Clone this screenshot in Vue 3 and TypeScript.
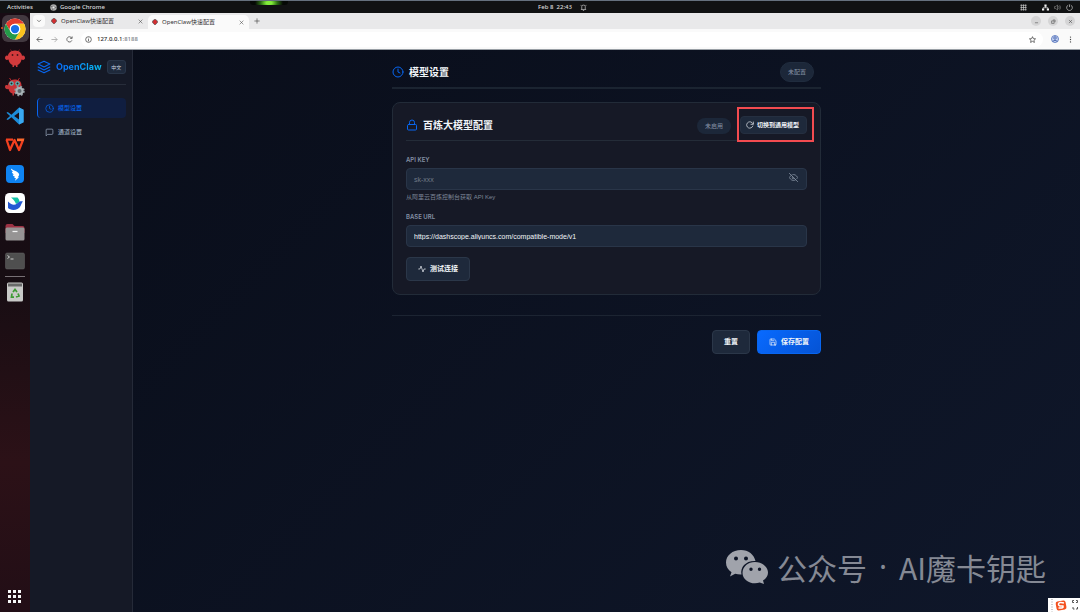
<script setup lang="ts">
import { ref } from 'vue'

interface Tab { id: number; title: string; active: boolean }
interface NavItem { id: string; label: string; icon: 'clock' | 'chat' }

const tabs: Tab[] = [
  { id: 1, title: 'OpenClaw快速配置', active: false },
  { id: 2, title: 'OpenClaw快速配置', active: true },
]
const navItems: NavItem[] = [
  { id: 'model', label: '模型设置', icon: 'clock' },
  { id: 'channel', label: '通道设置', icon: 'chat' },
]
const current = ref('model')
const apiKey = ref('')
const baseUrl = ref('https://dashscope.aliyuncs.com/compatible-mode/v1')
const keyVisible = ref(false)

function reset(): void {
  apiKey.value = ''
  baseUrl.value = 'https://dashscope.aliyuncs.com/compatible-mode/v1'
}
</script>

<template>
  <div class="desktop">
    <header class="topbar">
      <span class="activities">Activities</span>
      <span class="app-name">
        <svg viewBox="0 0 16 16" class="i7"><circle cx="8" cy="8" r="7.5" fill="#a9a9a9" /><path d="M8 8 1.5 4.5M8 8h7.5M8 8l-3 7" stroke="#555" stroke-width="1.5" /><circle cx="8" cy="8" r="3" fill="#eee" stroke="#666" /></svg>
        Google Chrome
      </span>
      <span class="clock">Feb 8&nbsp; 22:43
        <svg viewBox="0 0 16 16" class="i7 line"><path d="M2 12.500h12M4 12V5.500q0-3 4-3t4 3V12M6.500 15h3M1 2l2 2M15 2l-2 2" /></svg>
      </span>
      <span class="tray">
        <svg viewBox="0 0 16 16" class="i7 line grid-glyph"><path d="M3 1v14M8 1v14M13 1v14M1 3h14M1 8h14M1 13h14" /></svg>
        <svg viewBox="0 0 16 16" class="i7"><path d="M5.500 1h5v5h-5zM0 10h5v5H0zM11 10h5v5h-5z" fill="#f2f2f2" /><path d="M8 5v3.500M2.500 11V8.500h11V11" fill="none" stroke="#f2f2f2" stroke-width="1.500" /></svg>
        <svg viewBox="0 0 16 16" class="i7 line dim"><path d="M1 6v4h3l4 4V2L4 6zM10.500 5q2.500 3 0 6M13 3q4 5 0 10" /></svg>
        <svg viewBox="0 0 16 16" class="i7 line"><path d="M5 2.500a6.500 6.500 0 1 0 6 0M8 1v6" /></svg>
      </span>
      <span class="glow"></span>
    </header>

    <div class="workspace">
      <nav class="dock" aria-label="Dock">
        <button class="dock-item" aria-label="Google Chrome">
          <span class="tile">
            <svg viewBox="0 0 48 48" class="d22"><circle cx="24" cy="24" r="23" fill="#fff" /><path d="M4.100 12.500A23 23 0 0 1 43.900 12.500H24A11.500 11.500 0 0 0 14 29.700z" fill="#e33b2e" /><path d="M43.900 12.500A23 23 0 0 1 24 47l10-17.300A11.500 11.500 0 0 0 24 12.500z" fill="#fcc31e" /><path d="M24 47A23 23 0 0 1 4.100 12.500L14 29.700a11.500 11.500 0 0 0 20 0z" fill="#249a49" /><circle cx="24" cy="24" r="11.500" fill="#fff" /><circle cx="24" cy="24" r="9" fill="#1a6fe8" /></svg>
          </span>
          <span class="running"></span>
        </button>
        <button class="dock-item" aria-label="OpenClaw">
          <svg viewBox="0 0 40 40" class="d20"><path d="M15 9 11 3M25 9l4-6" stroke="#8f2429" stroke-width="1.500" /><path d="M20 5C11 5 6 11 6 16c-3-2-6 0-6 4 0 3 3 5 7 3 1 6 4 9 8 11v4h3v-3h4v3h3v-4c4-2 7-5 8-11 4 2 7 0 7-3 0-4-3-6-6-4-0-5-5-11-14-11z" fill="#d23a3c" /><circle cx="15" cy="14" r="1.800" fill="#451318" /><circle cx="25" cy="14" r="1.800" fill="#451318" /></svg>
        </button>
        <button class="dock-item" aria-label="OpenClaw Settings">
          <svg viewBox="0 0 40 40" class="d20"><path d="M14 9 9 2M24 9l5-7" stroke="#b9282c" stroke-width="2" /><path d="M19 5C10 5 6 12 6 17c-3-2-6-1-6 3 0 3 3 5 7 4 1 5 4 8 8 9v4h3v-4c10 0 15-8 15-16C33 9 28 5 19 5z" fill="#c93538" /><circle cx="13" cy="13" r="4.500" fill="#5bb8b8" /><circle cx="25" cy="13" r="4.500" fill="#5bb8b8" /><circle cx="13" cy="13" r="2" fill="#222" /><circle cx="25" cy="13" r="2" fill="#222" /><circle cx="29" cy="28" r="8.500" fill="none" stroke="#8e9a9e" stroke-width="4" stroke-dasharray="3.700 3" /><circle cx="29" cy="28" r="6" fill="#5d676b" stroke="#a9b3b6" stroke-width="4" /></svg>
        </button>
        <button class="dock-item" aria-label="Visual Studio Code">
          <svg viewBox="0 0 40 40" class="d18"><path d="M29 1 39 6v28l-10 5-17-16-8 6-3-2 8-7-8-7 3-2 8 6zM29 12 18 20l11 8z" fill="#1c8bd8" fill-rule="evenodd" /><path d="M29 1 39 6v28l-10 5z" fill="#3aa6ee" /></svg>
        </button>
        <button class="dock-item" aria-label="WPS Office">
          <svg viewBox="0 0 40 28" class="d20"><path d="M2 3h14M3 3l7 21 9-20 9 20 8-20H24" fill="none" stroke="#f5401f" stroke-width="4.500" stroke-linejoin="round" /><path d="M24 1h15l-2 5H24z" fill="#ff6a2c" /></svg>
        </button>
        <button class="dock-item" aria-label="DingTalk">
          <svg viewBox="0 0 40 40" class="d18"><rect width="40" height="40" rx="9" fill="#0f83f2" /><path d="M11 8c6 5 15 6 18 12 1 3-2 6-3 7h3l-9 8 2-6h-4l2-3c-4-1-5-4-5-5h3c-4-2-5-5-5-6h3c-4-3-5-5-5-7z" fill="#fff" /></svg>
        </button>
        <button class="dock-item" aria-label="Feishu">
          <svg viewBox="0 0 40 40" class="d20"><rect width="40" height="40" rx="9" fill="#fff" /><path d="M12 9h13c3 3 4 6 4 9l-7 4c-2-6-6-10-10-13z" fill="#14c1a7" /><path d="M6 17c8 8 13 8 18 4 5-5 8-5 12-4-4 4-4 12-11 15-8 4-16 1-19-2z" fill="#2458d3" /></svg>
        </button>
        <button class="dock-item" aria-label="Files">
          <svg viewBox="0 0 40 36" class="d20"><path d="M1 6q0-4 4-4h10l4 4h16q4 0 4 4v10H1z" fill="#9d3143" /><rect x="1" y="9" width="38" height="26" rx="3" fill="#969494" /><path d="M15 17h10" stroke="#f2f2f2" stroke-width="2.500" /></svg>
        </button>
        <button class="dock-item" aria-label="Terminal">
          <svg viewBox="0 0 40 34" class="d20"><rect x="1" y="1" width="38" height="32" rx="3" fill="#4f4f4f" stroke="#666" /><path d="m5 6 4 3-4 3M11 13h6" fill="none" stroke="#ccc" stroke-width="2" /></svg>
        </button>
        <span class="dock-rule"></span>
        <button class="dock-item" aria-label="Trash">
          <svg viewBox="0 0 34 40" class="d20"><rect x="1" y="1" width="32" height="38" rx="3" fill="#c9cac8" /><path d="M3 3h28v6H3z" fill="#6a6a6a" /><path d="m13 20 4-5 4 5M23 23l2 5-6 2M15 30h-5l1-7" fill="none" stroke="#3e9b35" stroke-width="3.500" /></svg>
        </button>
        <button class="dock-item apps" aria-label="Show Applications">
          <svg viewBox="0 0 14 14" class="i14"><path d="M0 0h3v3H0zM5 0h3v3H5zM10 0h3v3h-3zM0 5h3v3H0zM5 5h3v3H5zM10 5h3v3h-3zM0 10h3v3H0zM5 10h3v3H5zM10 10h3v3h-3z" fill="#f7f7f7" /></svg>
        </button>
      </nav>

      <section class="browser">
        <div class="tabstrip">
          <button class="tab-search" aria-label="Search tabs"><svg viewBox="0 0 16 16" class="i6"><path d="m3 5 5 5 5-5" /></svg></button>
          <div v-for="tab in tabs" :key="tab.id" class="tab" :class="{ active: tab.active }">
            <svg viewBox="0 0 16 16" class="favicon"><path d="M8 1c4 0 5 3 5 5 3-1 3 4 0 4-1 3-3 5-5 5s-4-2-5-5C0 10 0 5 3 6c0-2 1-5 5-5z" fill="#d42d30" /></svg>
            <span class="tab-title">{{ tab.title }}</span>
            <button aria-label="Close tab"><svg viewBox="0 0 16 16" class="i5"><path d="m2 2 12 12M14 2 2 14" /></svg></button>
          </div>
          <button class="new-tab" aria-label="New tab"><svg viewBox="0 0 16 16" class="i6"><path d="M8 1v14M1 8h14" /></svg></button>
          <div class="window-buttons">
            <button aria-label="Minimize"><svg viewBox="0 0 16 16" class="i5"><path d="M3 12h10" /></svg></button>
            <button aria-label="Restore"><svg viewBox="0 0 16 16" class="i5"><path d="M2 6h8v8H2zM6 3h7v7" /></svg></button>
            <button aria-label="Close"><svg viewBox="0 0 16 16" class="i5"><path d="m3 3 10 10M13 3 3 13" /></svg></button>
          </div>
        </div>
        <div class="toolbar">
          <button aria-label="Back"><svg viewBox="0 0 16 16" class="i7"><path d="M15 8H2m6-6L2 8l6 6" /></svg></button>
          <button aria-label="Forward" class="faded"><svg viewBox="0 0 16 16" class="i7"><path d="M1 8h13M8 2l6 6-6 6" /></svg></button>
          <button aria-label="Reload"><svg viewBox="0 0 16 16" class="i7"><path d="M13.500 10A6 6 0 1 1 13 4.500M14 1v4.500H9.500" /></svg></button>
          <div class="address">
            <svg viewBox="0 0 16 16" class="i7"><circle cx="8" cy="8" r="6.500" /><path d="M8 7v5M8 4v1.500" /></svg>
            <span class="url">127.0.0.1<i>:8188</i></span>
            <button aria-label="Bookmark"><svg viewBox="0 0 16 16" class="i7"><path d="m8 1.500 2 4.500 5 .5-3.700 3.300 1 4.900L8 12.200l-4.300 2.500 1-4.900L1 6.500 6 6z" /></svg></button>
          </div>
          <button aria-label="Profile"><svg viewBox="0 0 16 16" class="i8"><circle cx="8" cy="8" r="7" fill="#c9d5f4" stroke="#5472ba" /><circle cx="8" cy="6" r="2.500" stroke="#3d5da9" /><path d="M3.500 12.500q4.500-4 9 0" stroke="#3d5da9" /></svg></button>
          <button aria-label="Menu"><svg viewBox="0 0 16 16" class="i7 dots"><circle cx="8" cy="2.500" r="1.500" /><circle cx="8" cy="8" r="1.500" /><circle cx="8" cy="13.500" r="1.500" /></svg></button>
        </div>

        <div class="page">
          <aside class="sidebar">
            <div class="brand">
              <svg viewBox="0 0 24 24" class="i14 stroke blue"><path d="M12 2 2 7l10 5 10-5zM2 17l10 5 10-5M2 12l10 5 10-5" /></svg>
              <span class="brand-name">OpenClaw</span>
              <button class="lang">中文</button>
            </div>
            <nav class="menu">
              <a v-for="item in navItems" :key="item.id" href="#" :class="{ active: current === item.id }" @click.prevent="current = item.id">
                <svg viewBox="0 0 24 24" class="i9 stroke">
                  <g v-if="item.icon === 'clock'"><circle cx="12" cy="12" r="10" /><path d="M12 6v6l4 2" /></g>
                  <path v-else d="M21 15a2 2 0 0 1-2 2H7l-4 4V5a2 2 0 0 1 2-2h14a2 2 0 0 1 2 2z" />
                </svg>
                {{ item.label }}
              </a>
            </nav>
          </aside>

          <main class="content">
            <div class="inner">
              <header class="page-head">
                <svg viewBox="0 0 24 24" class="i12 stroke blue"><circle cx="12" cy="12" r="10" /><path d="M12 6v6l4 2" /></svg>
                <h1>模型设置</h1>
                <span class="pill big">未配置</span>
              </header>

              <section class="card">
                <header class="card-head">
                  <svg viewBox="0 0 24 24" class="i12 stroke blue"><rect x="3" y="11" width="18" height="11" rx="2" /><path d="M7 11V7a5 5 0 0 1 10 0v4" /></svg>
                  <h2>百炼大模型配置</h2>
                  <span class="pill">未启用</span>
                  <button class="btn small">
                    <svg viewBox="0 0 24 24" class="i8 stroke"><path d="M22 3v7h-7M20.500 15A9.500 9.500 0 1 1 18 5l4 4" /></svg>
                    切换到通用模型
                  </button>
                </header>

                <label class="field-label" for="api-key">API KEY</label>
                <div class="field">
                  <input id="api-key" v-model="apiKey" :type="keyVisible ? 'text' : 'password'" placeholder="sk-xxx">
                  <button class="eye" aria-label="Toggle key visibility" @click="keyVisible = !keyVisible">
                    <svg viewBox="0 0 24 24" class="i9 stroke"><path d="M17.900 17.900A10 10 0 0 1 12 20C5 20 1 12 1 12a18 18 0 0 1 5-6M10 4.200A9 9 0 0 1 12 4c7 0 11 8 11 8a18 18 0 0 1-2.200 3.200M14 14a3 3 0 1 1-4-4M1 1l22 22" /></svg>
                  </button>
                </div>
                <p class="hint">从阿里云百炼控制台获取 API Key</p>
                <label class="field-label" for="base-url">BASE URL</label>
                <div class="field"><input id="base-url" v-model="baseUrl" type="text"></div>
                <button class="btn test">
                  <svg viewBox="0 0 24 24" class="i8 stroke"><path d="M22 12h-4l-3 9L9 3l-3 9H2" /></svg>
                  测试连接
                </button>
              </section>

              <footer class="actions">
                <button class="btn" @click="reset">重置</button>
                <button class="btn primary">
                  <svg viewBox="0 0 24 24" class="i8 stroke"><path d="M19 21H5a2 2 0 0 1-2-2V5a2 2 0 0 1 2-2h11l5 5v11a2 2 0 0 1-2 2zM17 21v-8H7v8M7 3v5h8" /></svg>
                  保存配置
                </button>
              </footer>
            </div>
          </main>
        </div>
      </section>
    </div>

    <div class="watermark">
      <svg viewBox="0 0 42 34" class="wechat">
        <path fill-rule="evenodd" d="M15 0C6.500 0 0 5.500 0 12.500c0 4 2 7.500 5.500 9.700L4 26.500l5.200-2.700c2 .6 4 .9 6.300.8C14 17 20 10.500 29.500 11 28 4.500 22.500 0 15 0zM10 6.500a2 2 0 1 1 0 4 2 2 0 0 1 0-4zM20 6.500a2 2 0 1 1 0 4 2 2 0 0 1 0-4z" />
        <path fill-rule="evenodd" d="M29 12c-7 0-12.500 4.700-12.500 10.700S22 33.300 29 33.300c1.700 0 3.300-.3 4.700-.8L38 34l-1-3.500c3-2 5-4.800 5-7.800C42 16.700 36 12 29 12zM25 17.500a1.700 1.700 0 1 1 0 3.400 1.700 1.700 0 0 1 0-3.400zM33.500 17.500a1.700 1.700 0 1 1 0 3.400 1.700 1.700 0 0 1 0-3.400z" />
      </svg>
      <span>公众号</span><span class="dot">·</span><span>AI魔卡钥匙</span>
    </div>
    <div class="ime">
      <svg viewBox="0 0 32 14" class="ime-art"><path d="M4 1v13" stroke="#999" stroke-dasharray="1 1.500" /><rect x="8" y="3" width="10" height="9" rx="2" fill="#f4511f" transform="rotate(-10 13 7)" /><path d="M16 5q-5-1.500-5.500 1T15 8q1 2.500-4.500 2" fill="none" stroke="#fff" stroke-width="1.500" /><path d="M26 2.500h-1.500v2H26M28 2.500h1.500v2H28M25 9v2h1.500M29.500 9v2H28" fill="none" stroke="#555" /></svg>
    </div>
  </div>
</template>

<style>
body { background: #0a0f1c; }
</style>

<style scoped>
* { box-sizing: border-box; }
.desktop {
  position: relative;
  display: grid;
  grid-template-rows: 13px 1fr;
  min-height: 100vh;
  overflow: hidden;
  background: #0a0f1c;
  color: #f1f5f9;
  font: 6px/10px Inter, "Liberation Sans", "Noto Sans CJK SC", sans-serif;
}
button {
  display: inline-flex;
  align-items: center;
  justify-content: center;
  padding: 0;
  border: 0;
  background: none;
  color: inherit;
  font: inherit;
  cursor: pointer;
}
svg { display: block; flex: none; }
.i5 { width: 5px; height: 5px; }
.i6 { width: 6px; height: 6px; }
.i7 { width: 7px; height: 7px; }
.i8 { width: 8px; height: 8px; }
.i9 { width: 9px; height: 9px; }
.i12 { width: 12px; height: 12px; }
.i14 { width: 14px; height: 14px; }
.d18 { width: 18px; height: 18px; }
.d20 { width: 20px; height: 20px; }
.d22 { width: 22px; height: 22px; }
.stroke { fill: none; stroke: currentColor; stroke-width: 2; stroke-linecap: round; stroke-linejoin: round; }
.blue { color: #0866f0; }

.topbar {
  position: relative;
  display: grid;
  grid-template-columns: 43px 1fr auto 1fr;
  align-items: center;
  padding: 0 7px;
  border-top: 1px solid #66717e;
  background: #111213;
  color: #dcdcdc;
  font: 500 6px/11px "Noto Sans", sans-serif;
}
.topbar .line { fill: none; stroke: #d5d5d5; stroke-width: 1.5; }
.topbar .dim { stroke: #858585; }
.app-name, .clock, .tray { display: flex; align-items: center; gap: 3px; }
.clock { gap: 8px; padding-left: 2px; }
.tray { justify-content: flex-end; gap: 5px; }
.grid-glyph { margin-right: 10px; }
.glow {
  position: absolute;
  top: 0;
  left: 250px;
  width: 38px;
  height: 4px;
  border-radius: 0 0 3px 3px;
  background: radial-gradient(ellipse 14px 8px at center, #82ec3a 20%, #2b6d12 60%, #050805 100%);
}

.workspace { display: grid; grid-template-columns: 30px 1fr; }
.dock {
  display: flex;
  flex-direction: column;
  align-items: center;
  padding: 1px 0;
  background: linear-gradient(#180c14, #170d13 45%, #2c1117 75%, #220e16);
}
.dock-item { position: relative; width: 30px; height: 29px; }
.running { position: absolute; left: 1px; top: 13px; width: 2px; height: 2px; border-radius: 50%; background: #e95420; }
.tile { display: grid; place-items: center; width: 27px; height: 27px; border-radius: 6px; background: #42383f; }
.dock-rule { width: 20px; height: 1px; margin-top: 1px; background: #777075; }
.apps { margin-top: auto; }

.browser { display: grid; grid-template-rows: 16px 21px 1fr; min-width: 0; }
.browser .tabstrip svg, .toolbar svg { fill: none; stroke: #444; stroke-width: 1.7; }
.tabstrip {
  display: flex;
  align-items: center;
  padding: 0 5px 0 3px;
  background: #e9e9ea;
  color: #333;
  font: 6px/14px "Noto Sans", "Noto Sans CJK SC", sans-serif;
}
.tab-search { width: 12px; height: 12px; margin-right: 2px; border-radius: 4px; background: #fafafa; }
.tab { display: flex; align-items: center; gap: 4px; width: 101px; height: 14px; padding: 0 5px 0 4px; }
.tab.active { align-self: flex-end; border-radius: 5px 5px 0 0; background: #fafafa; }
.tabstrip .favicon { width: 6px; height: 6px; stroke: none; }
.tab-title { flex: 1; white-space: nowrap; }
.new-tab { margin-left: 5px; }
.window-buttons { display: flex; gap: 7px; margin-left: auto; }
.window-buttons button { width: 10px; height: 10px; border-radius: 50%; background: #d5d5d6; }
.toolbar {
  display: flex;
  align-items: center;
  gap: 8px;
  padding: 0 6px;
  border-bottom: 1px solid #9aa0a6;
  background: #fafafa;
  color: #2d2d2d;
}
.toolbar .faded { opacity: .5; }
.address { display: flex; flex: 1; align-items: center; gap: 5px; height: 15px; padding: 0 7px 0 4px; border-radius: 8px; background: #fff; }
.url { flex: 1; font: 500 6px/10px "Noto Sans", sans-serif; }
.url i { color: #80868b; font-style: normal; }
.toolbar .dots { fill: #444; stroke: none; }

.page { display: grid; grid-template-columns: 103px 1fr; background: linear-gradient(135deg, #090d19, #0f172a); }
.sidebar { padding: 10px 6px 10px 7px; border-right: 1px solid #252a38; background: #151926; }
.brand { display: flex; align-items: center; gap: 5px; padding-bottom: 10px; border-bottom: 1px solid #272d3a; }
.brand-name {
  flex: 1;
  background: linear-gradient(90deg, #0a6cff, #08bdf0);
  background-clip: text;
  color: transparent;
  font-size: 9px;
  font-weight: 700;
}
.lang { width: 20px; height: 14px; border: 1px solid #293548; border-radius: 3px; background: #1e293b; color: #cbd5e1; font-size: 5px; }
.menu { display: flex; flex-direction: column; gap: 4px; padding-top: 13px; }
.menu a {
  display: flex;
  align-items: center;
  gap: 4px;
  height: 20px;
  padding-left: 7px;
  border-left: 1px solid transparent;
  border-radius: 4px;
  color: #94a3b8;
  font-weight: 500;
  text-decoration: none;
}
.menu a.active { border-left-color: #0866f0; background: #101e40; color: #0763ea; }

.content { padding: 12px 24px; }
.inner { max-width: 429px; margin: 0 auto; }
.page-head { display: flex; align-items: center; gap: 5px; padding-bottom: 5px; border-bottom: 2px solid #1b2431; }
h1, h2 { flex: 1; margin: 0; font-size: 10px; line-height: 14px; font-weight: 700; }
.pill { padding: 3px 8px; border-radius: 10px; background: #1c2739; color: #8794a7; }
.pill.big { margin-right: 7px; padding: 4px 7px; border: 1px solid #202c3e; }
.card { margin-top: 13px; padding: 12px 13px 13px; border: 1px solid #222b38; border-radius: 8px; background: #161926; }
.card-head { display: flex; align-items: center; gap: 5px; padding-bottom: 6px; border-bottom: 1px solid #242c38; }
.card-head .pill { margin-top: 3px; }
.btn {
  gap: 4px;
  height: 24px;
  padding: 0 11px;
  border: 1px solid #2b3749;
  border-radius: 4px;
  background: #1e293b;
  color: #f1f5f9;
  font-size: 7px;
  font-weight: 700;
}
.btn.small { position: relative; height: 18px; margin-left: 4px; padding: 0 7px 0 5px; gap: 3px; font-size: 6px; border-color: #252f40; }
.btn.small::after { content: ""; position: absolute; inset: -10px -8px -9px -4px; border: 2px solid #f34b50; pointer-events: none; }
.field-label { display: block; margin-top: 14px; color: #8491a5; font-weight: 600; }
.field { position: relative; margin-top: 3px; }
input {
  display: block;
  width: 100%;
  height: 22px;
  padding: 0 7px;
  border: 1px solid #293548;
  border-radius: 4px;
  outline: 0;
  background: #1e293b;
  color: #f1f5f9;
  font: 7px/12px "Liberation Sans", Arial, sans-serif;
}
input::placeholder { color: #707986; }
.eye { position: absolute; top: 5px; right: 9px; color: #8d99aa; }
.hint { margin: 2px 0 0; color: #7d8798; font: 6px/10px "Liberation Sans", "Noto Sans CJK SC", sans-serif; }
.hint + .field-label { margin-top: 10px; }
.test { margin-top: 10px; }
.actions { display: flex; justify-content: flex-end; gap: 7px; margin-top: 20px; padding-top: 14px; border-top: 1px solid #1c2432; }
.actions .primary { border-color: #0866f0; background: linear-gradient(135deg, #086aff, #0553d4); }

.watermark {
  position: absolute;
  right: 34px;
  bottom: 23px;
  display: flex;
  align-items: center;
  color: #858994;
  font: 400 30px/44px "Noto Sans CJK SC", sans-serif;
}
.dot { padding: 0 12px; font-family: "Noto Sans", sans-serif; }
.wechat { width: 42px; height: 34px; margin-right: 9px; fill: #a0a3ab; }
.ime { position: absolute; right: 0; bottom: 0; width: 32px; height: 14px; background: #fff; }
.ime-art { width: 32px; height: 14px; }
</style>
